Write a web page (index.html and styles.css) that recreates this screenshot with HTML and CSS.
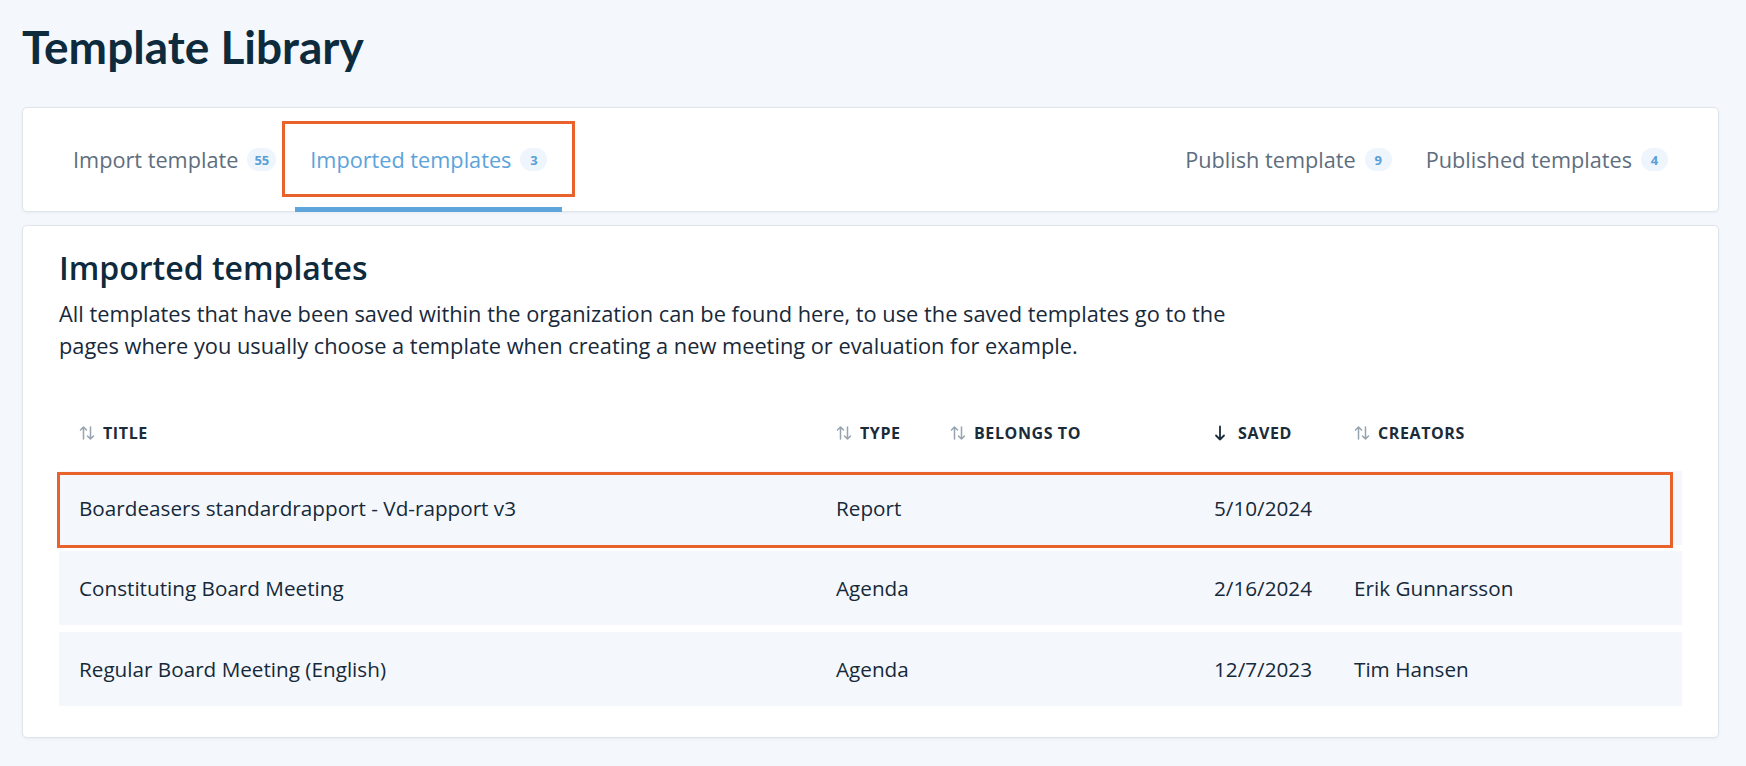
FILE: index.html
```html
<!DOCTYPE html>
<html lang="en">
<head>
    <meta charset="UTF-8">
    <meta name="viewport" content="width=device-width, initial-scale=1.0">
    <title>Template Library</title>
    <link rel="stylesheet" href="styles.css">
</head>
<body>
    <div class="page">
        <h1 class="page-title">Template Library</h1>

        <div class="card tabs-card">
            <nav class="tabs">
                <div class="tab-group">
                    <a class="tab">Import template <span class="badge">55</span></a>
                    <a class="tab active marked">Imported templates <span class="badge">3</span></a>
                </div>
                <div class="tab-group">
                    <a class="tab">Publish template <span class="badge">9</span></a>
                    <a class="tab">Published templates <span class="badge">4</span></a>
                </div>
            </nav>
        </div>

        <div class="card content-card">
            <h2 class="section-title">Imported templates</h2>
            <p class="intro">All templates that have been saved within the organization can be found here, to use the saved templates go to the pages where you usually choose a template when creating a new meeting or evaluation for example.</p>

            <div class="table">
                <div class="table-head">
                    <div class="th">
                        <svg class="sort" viewBox="0 0 16 16"><path d="M4.5 14V2M1.5 5l3-3 3 3M11.5 2v12M8.5 11l3 3 3-3"/></svg>
                        Title
                    </div>
                    <div class="th">
                        <svg class="sort" viewBox="0 0 16 16"><path d="M4.5 14V2M1.5 5l3-3 3 3M11.5 2v12M8.5 11l3 3 3-3"/></svg>
                        Type
                    </div>
                    <div class="th">
                        <svg class="sort" viewBox="0 0 16 16"><path d="M4.5 14V2M1.5 5l3-3 3 3M11.5 2v12M8.5 11l3 3 3-3"/></svg>
                        Belongs to
                    </div>
                    <div class="th">
                        <svg class="sort sorted" viewBox="0 0 16 16"><path d="M6 1.5v13M2 10.5l4 4 4-4"/></svg>
                        Saved
                    </div>
                    <div class="th">
                        <svg class="sort" viewBox="0 0 16 16"><path d="M4.5 14V2M1.5 5l3-3 3 3M11.5 2v12M8.5 11l3 3 3-3"/></svg>
                        Creators
                    </div>
                </div>

                <div class="table-row marked">
                    <div class="td">Boardeasers standardrapport - Vd-rapport v3</div>
                    <div class="td">Report</div>
                    <div class="td"></div>
                    <div class="td">5/10/2024</div>
                    <div class="td"></div>
                </div>
                <div class="table-row">
                    <div class="td">Constituting Board Meeting</div>
                    <div class="td">Agenda</div>
                    <div class="td"></div>
                    <div class="td">2/16/2024</div>
                    <div class="td">Erik Gunnarsson</div>
                </div>
                <div class="table-row">
                    <div class="td">Regular Board Meeting (English)</div>
                    <div class="td">Agenda</div>
                    <div class="td"></div>
                    <div class="td">12/7/2023</div>
                    <div class="td">Tim Hansen</div>
                </div>
            </div>
        </div>
    </div>
</body>
</html>
```

FILE: styles.css
```css
body {
    margin: 0;
    background: #f4f8fc;
    font-family: "Open Sans", "Noto Sans", sans-serif;
    color: #16293a;
}
.page {
    padding: 19px 27px 28px 22px;
}
.page-title {
    margin: 0 0 33px;
    font-family: Lato, "Open Sans", sans-serif;
    font-size: 46px;
    line-height: 1.2;
    font-weight: 700;
    color: #0e2a3d;
}
.card {
    background: #fff;
    border: 1px solid #dfe5eb;
    border-radius: 5px;
    box-shadow: 0 1px 3px rgba(20, 50, 80, 0.06);
}

/* tabs */
.tabs-card {
    padding: 0 35px;
}
.tabs {
    display: flex;
    justify-content: space-between;
    height: 103px;
}
.tab-group {
    display: flex;
    gap: 4px;
}
.tab {
    position: relative;
    display: flex;
    align-items: center;
    gap: 9px;
    height: 104px;
    box-sizing: border-box;
    padding: 4px 15px 0;
    margin-bottom: -1px;
    border-bottom: 5px solid transparent;
    font-size: 21.7px;
    color: #5e6e7e;
    cursor: pointer;
}
.tab.active {
    color: #5ca3da;
    border-bottom-color: #5da5db;
}
.badge {
    display: inline-flex;
    align-items: center;
    justify-content: center;
    min-width: 27px;
    height: 23px;
    padding: 0 7px;
    box-sizing: border-box;
    border-radius: 12px;
    background: #eef5fc;
    color: #5a9fd8;
    font-size: 13px;
    font-weight: 700;
}
.tab.marked::after {
    content: "";
    position: absolute;
    left: -13px;
    right: -13px;
    top: 13px;
    bottom: 10px;
    border: 3px solid #e9622c;
}

/* content */
.content-card {
    margin-top: 13px;
    padding: 23px 36px 31px;
}
.section-title {
    margin: 0 0 10px;
    font-size: 32px;
    line-height: 1.2;
    font-weight: 600;
    color: #0e2a3d;
}
.intro {
    max-width: 1190px;
    margin: 0 0 45px;
    font-size: 21.8px;
    line-height: 32px;
    color: #18293a;
}

/* table */
.table {
    display: flex;
    flex-direction: column;
    gap: 6.5px;
}
.table-head, .table-row {
    display: grid;
    grid-template-columns: 757px 114px 264px 140px 1fr;
    align-items: center;
}
.table-head {
    height: 52px;
    margin-bottom: 5.5px;
}
.th {
    display: flex;
    align-items: center;
    gap: 8px;
    padding-left: 20px;
    font-size: 16px;
    font-weight: 700;
    letter-spacing: 0.6px;
    text-transform: uppercase;
    color: #1a2b3a;
}
.sort {
    width: 16px;
    height: 16px;
    fill: none;
    stroke: #97a3ae;
    stroke-width: 1.5;
    stroke-linecap: round;
    stroke-linejoin: round;
}
.sort.sorted {
    stroke: #1a2b3a;
    stroke-width: 1.8;
}
.table-row {
    position: relative;
    height: 74px;
    background: #f4f8fc;
    font-size: 20.7px;
}
.td {
    padding-left: 20px;
}
.table-row.marked::after {
    content: "";
    position: absolute;
    left: -2px;
    right: 9px;
    top: 1px;
    bottom: -3px;
    border: 3px solid #e9622c;
}
```
